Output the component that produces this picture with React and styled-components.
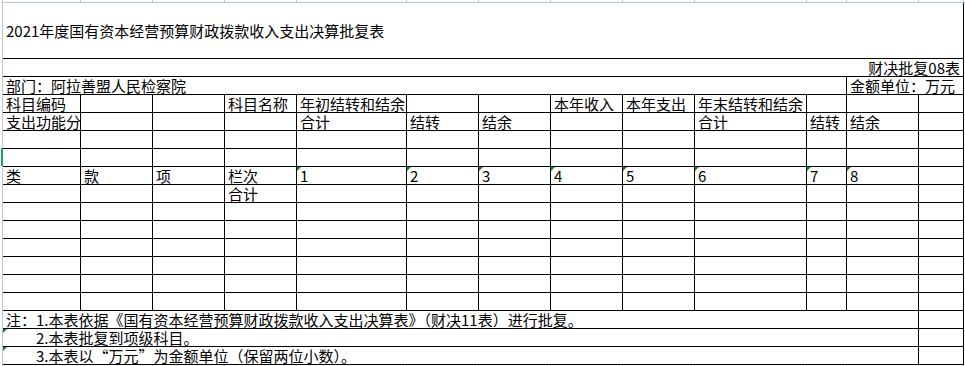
import React from "react"
import styled, { createGlobalStyle } from "styled-components"

// column widths incl. the 1px right border, taken off the sheet
const COLS = [78, 72, 72, 72, 110, 72, 72, 72, 72, 112, 40, 72, 45]
const GRID = COLS.map((w) => `${w}px`).join(" ")
const GRIDLINE = "#b9c5d8"

const head1 = ["科目编码", "", "", "科目名称", "年初结转和结余", "", "", "本年收入", "本年支出", "年末结转和结余", "", "", ""]
const head2 = ["支出功能分", "", "", "", "合计", "结转", "结余", "", "", "合计", "结转", "结余", ""]
const blank = Array(13).fill("")
const index = ["类", "款", "项", "栏次", "1", "2", "3", "4", "5", "6", "7", "8", ""]
const total = ["", "", "", "合计", "", "", "", "", "", "", "", "", ""]

const notes = [
  { text: "注：1.本表依据《国有资本经营预算财政拨款收入支出决算表》（财决11表）进行批复。" },
  { text: "　　2.本表批复到项级科目。", flag: true },
  { text: "　　3.本表以“万元”为金额单位（保留两位小数）。", flag: true },
]

const App = () => {
  const row = (cells, key, opts = {}) =>
    cells.map((c, i) => (
      <Cell key={`${key}-${i}`} $flag={opts.flagFrom !== undefined && i >= opts.flagFrom && i <= opts.flagTo}>
        {opts.marker && i === 0 && <Marker />}
        {c}
      </Cell>
    ))

  return (
    <Page>
      <GlobalStyle />
      <Ticks>
        {COLS.map((_, i) => (
          <Tick key={i} />
        ))}
      </Ticks>
      <Sheet>
        {/* heading */}
        <TitleCell $span={13}>2021年度国有资本经营预算财政拨款收入支出决算批复表</TitleCell>
        <Cell $span={13} $align='right'>
          财决批复08表
        </Cell>
        <Cell $span={11}>部门：阿拉善盟人民检察院</Cell>
        <Cell $span={2}>金额单位：万元</Cell>

        {/* table body */}
        {row(head1, "h1")}
        {row(head2, "h2")}
        {row(blank, "b1")}
        {row(blank, "b2", { marker: true })}
        {row(index, "ix", { flagFrom: 4, flagTo: 11 })}
        {row(total, "tt")}
        {[0, 1, 2, 3, 4, 5].map((n) => row(blank, `e${n}`))}

        {/* notes */}
        {notes.map((n, i) => (
          <React.Fragment key={`n${i}`}>
            <Cell $span={12} $flag={n.flag}>
              {n.text}
            </Cell>
            <Cell />
          </React.Fragment>
        ))}
      </Sheet>
      <Ticks>
        {COLS.map((_, i) => (
          <Tick key={i} />
        ))}
      </Ticks>
    </Page>
  )
}

export default App

const GlobalStyle = createGlobalStyle`
  html, body {
    margin: 0;
    padding: 0;
    background: #fff;
  }
  body {
    font-family: "Noto Sans CJK SC", "Noto Sans", sans-serif;
    font-size: 15px;
    color: #000;
  }
`

const Page = styled.div`
  display: flex;
  flex-direction: column;
  width: 965px;
  height: 366px;
  padding-left: 2px;
  box-sizing: border-box;
  overflow: hidden;
`

const Ticks = styled.div`
  display: grid;
  grid-template-columns: ${GRID};
  height: 2px;
  border-left: 1px solid ${GRIDLINE};
  flex-shrink: 0;
`

const Tick = styled.div`
  border-right: 1px solid ${GRIDLINE};
`

const Sheet = styled.div`
  display: grid;
  grid-template-columns: ${GRID};
  grid-template-rows: 56px repeat(17, 18px);
  border-top: 1px solid ${GRIDLINE};
  border-left: 1px solid ${GRIDLINE};
  flex-shrink: 0;
`

const Cell = styled.div`
  position: relative;
  grid-column: span ${(p) => p.$span || 1};
  box-sizing: border-box;
  border-right: 1px solid #000;
  border-bottom: 1px solid #000;
  padding: 0 3px;
  line-height: 17px;
  white-space: nowrap;
  text-align: ${(p) => p.$align || "left"};

  ${(p) =>
    p.$flag &&
    `
    &::before {
      content: "";
      position: absolute;
      top: 0;
      left: 0;
      border-top: 4px solid #0b8a18;
      border-right: 4px solid transparent;
    }
  `}
`

const TitleCell = styled(Cell)`
  display: flex;
  align-items: center;
  line-height: 20px;
`

const Marker = styled.span`
  position: absolute;
  left: -2px;
  top: -1px;
  bottom: 0;
  width: 2px;
  background: #21a366;
`
